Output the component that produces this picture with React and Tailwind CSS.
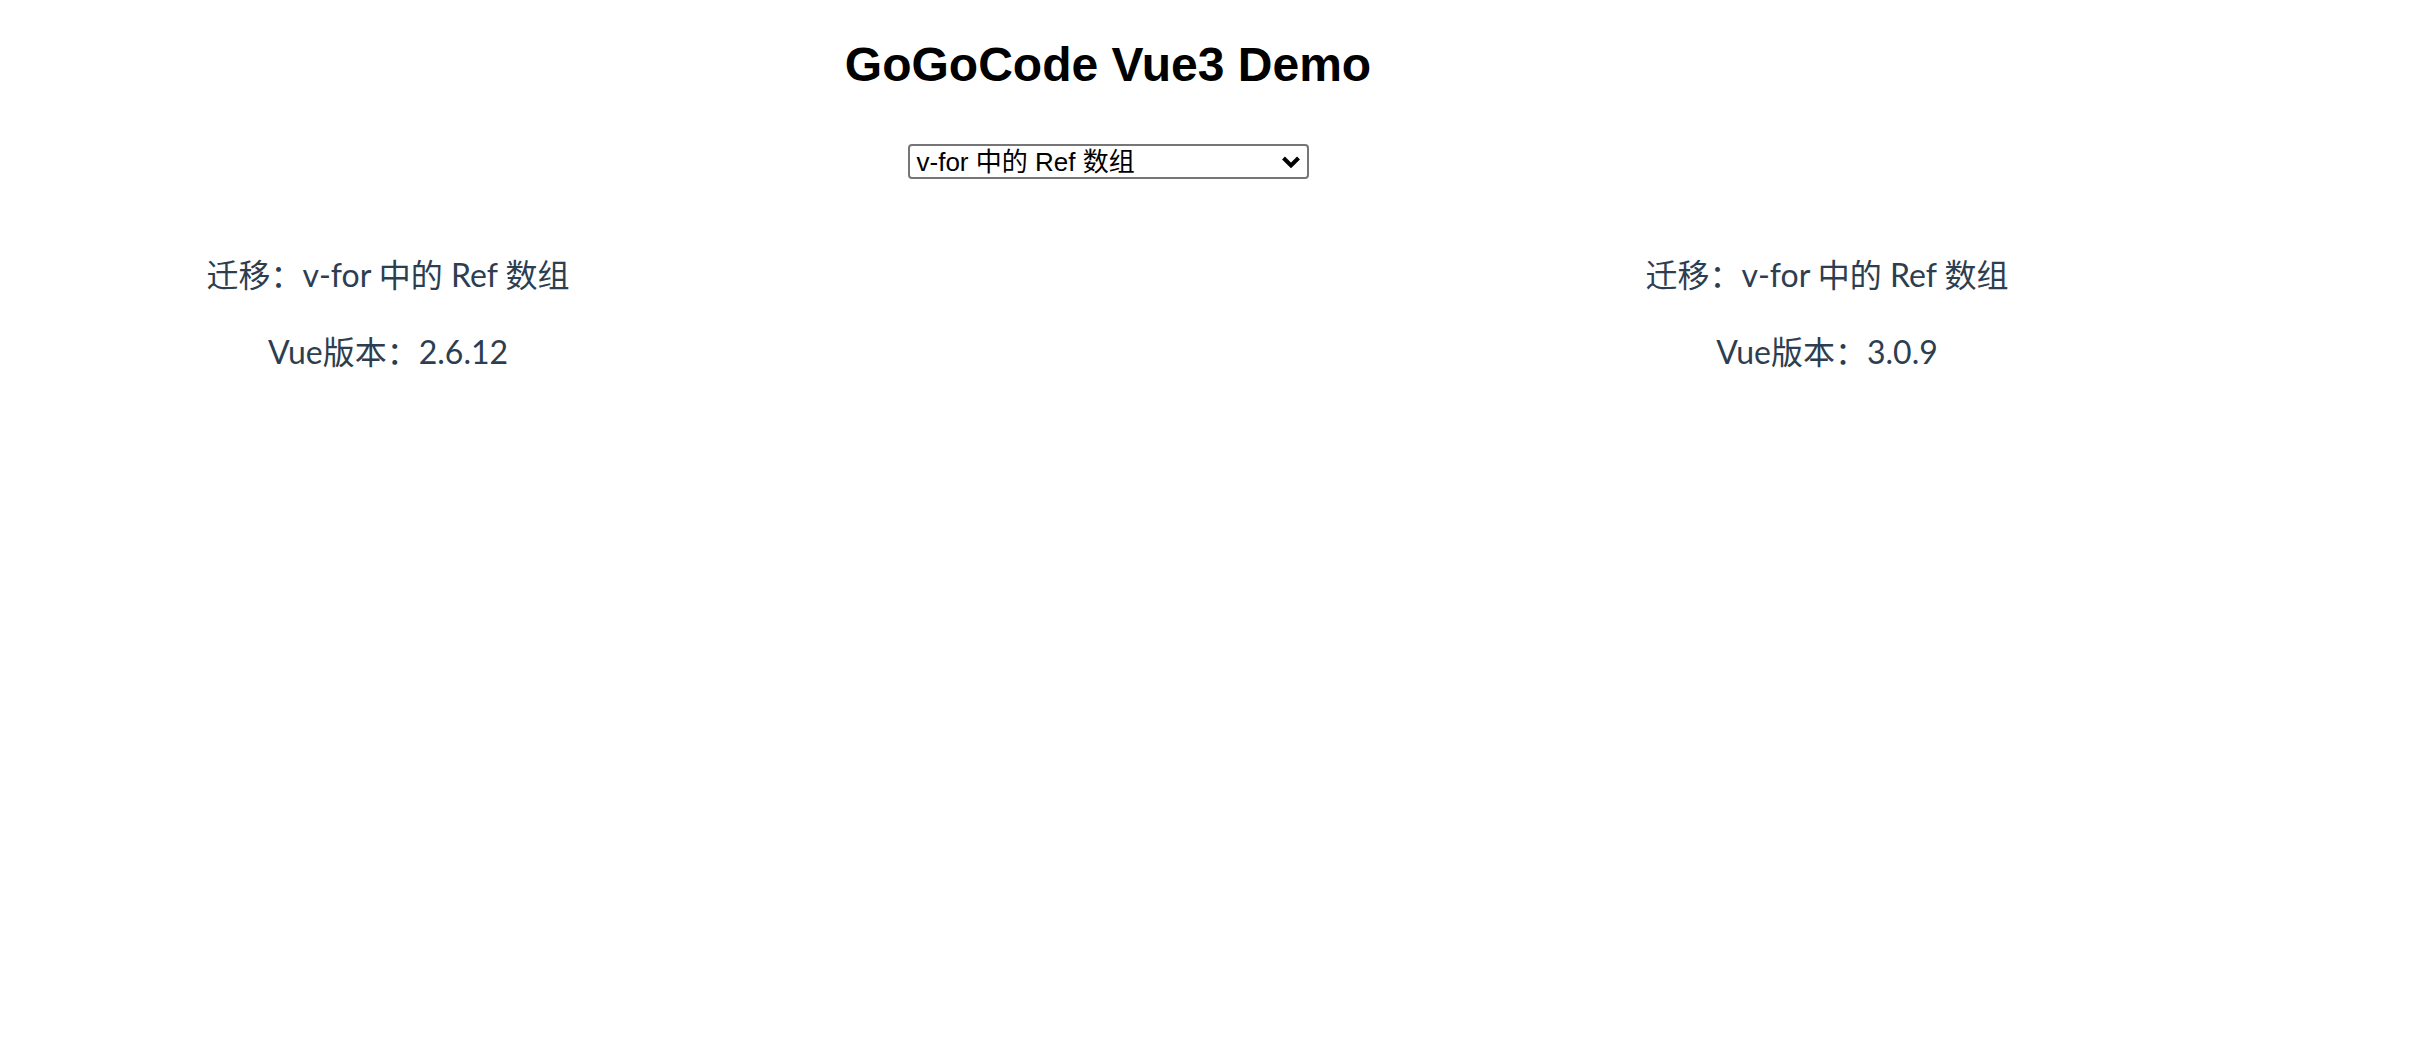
import React from "react";

const Column = ({ title, version, className }) => {
  return (
    <div className={`w-[776px] text-center text-[#2c3e50] text-[32px] leading-[40px] font-['Lato','Noto_Sans_CJK_SC',sans-serif] ${className}`}>
      <p>{title}</p>
      <p className="mt-[37px]">{version}</p>
    </div>
  );
};

const App = () => {
  return (
    <div className="w-[2216px] min-h-[1058px] bg-white text-center">
      <h1 className="pt-[37px] text-[48px] leading-[55px] font-bold text-black font-['Liberation_Sans','Noto_Sans_CJK_SC',sans-serif]">
        GoGoCode Vue3 Demo
      </h1>
      <div className="mt-[52px] flex justify-center">
        <div className="flex items-center justify-between w-[401px] h-[35px] border-2 border-[#767676] rounded-[4px] bg-white pl-[7px] pr-[6px] text-[26px] leading-[30px] text-black font-['Liberation_Sans','Noto_Sans_CJK_SC',sans-serif]">
          <span>v-for 中的 Ref 数组</span>
          <svg width="20" height="14" viewBox="0 0 20 14">
            <path d="M2.5 3 L10 10.5 L17.5 3" fill="none" stroke="#000" strokeWidth="4" />
          </svg>
        </div>
      </div>
      <div className="mt-[76px] flex">
        <Column title="迁移：v-for 中的 Ref 数组" version="Vue版本：2.6.12" />
        <Column className="ml-[663px]" title="迁移：v-for 中的 Ref 数组" version="Vue版本：3.0.9" />
      </div>
    </div>
  );
};

export default App;
